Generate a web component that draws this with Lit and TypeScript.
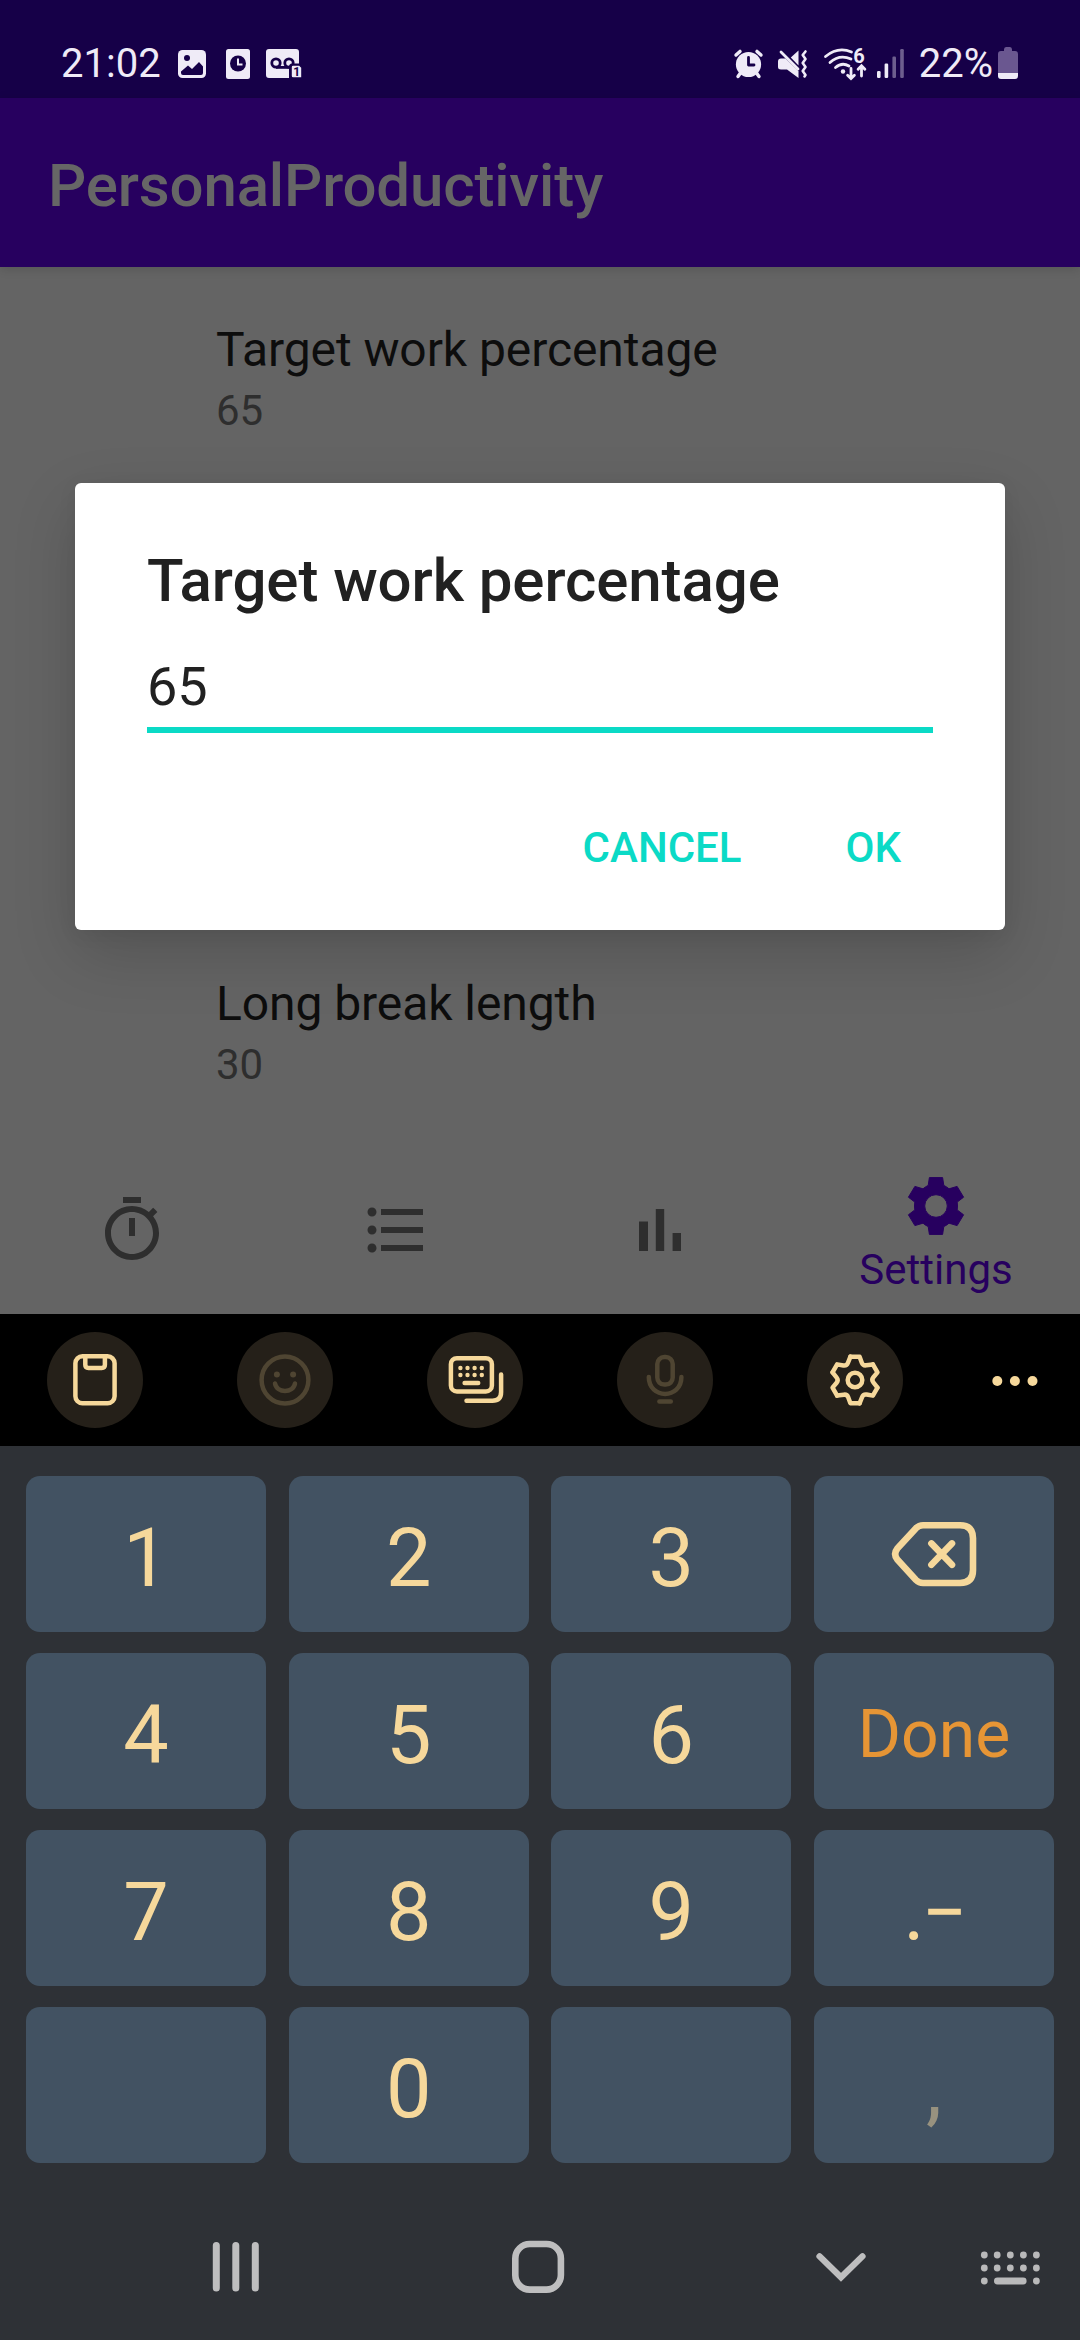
import { LitElement, html, svg, css } from "lit";
import { customElement, property } from "lit/decorators.js";

const INK = "#efebf7";

/** Status bar: clock and notifications on the left, device state on the right. */
@customElement("status-bar")
class StatusBar extends LitElement {
  static styles = css`
    :host { display: flex; justify-content: space-between; height: 98px; box-sizing: border-box; padding: 30px 62px 0 61px; background: #160048; color: #efebf7; }
    .group { display: flex; align-items: flex-start; height: 68px; }
    .label { font-size: 40px; line-height: 67px; white-space: nowrap; }
    svg { display: block; overflow: visible; margin-top: 17px; flex: none; }
    .image { margin-left: 17px; }
    .file { margin-left: 20px; }
    .voicemail { margin-left: 16px; }
    .mute { margin-left: 15px; }
    .wifi { margin-left: 16px; }
    .signal { margin-left: 10px; margin-right: 14px; }
    .battery { margin-left: 5px; }
    .tiny { font-size: 12px; font-weight: 700; }
    .six { font-size: 20px; font-weight: 700; }
  `;

  render() {
    return html`
      <div class="group">
        <span class="label">21:02</span>
        <svg class="image" width="28" height="32" viewBox="0 0 28 32">
          <rect x="0" y="3" width="28" height="28" rx="4.5" fill=${INK} />
          <circle cx="9" cy="11" r="3" fill="#160048" />
          <path d="M3 24.5 L10 18.5 L14 22 L21 15 L25 19.5 V26 Q25 28 23 28 H5 Q3 28 3 26 Z" fill="#160048" />
        </svg>
        <svg class="file" width="24" height="32" viewBox="0 0 24 32">
          <rect x="0" y="2" width="24" height="30" rx="2.5" fill=${INK} />
          <circle cx="12" cy="16.5" r="8" fill="#160048" />
          <path d="M12 11.5 V17.5 H16.5" fill="none" stroke=${INK} stroke-width="2" />
        </svg>
        <svg class="voicemail" width="37" height="32" viewBox="0 0 37 32">
          <path d="M3 2 H30 Q33 2 33 5 V16.5 H26 Q23 16.5 23 20 V31 H3 Q0 31 0 28 V5 Q0 2 3 2Z" fill=${INK} />
          <g fill="none" stroke="#160048" stroke-width="2.8">
            <circle cx="10" cy="16" r="4.2" /><circle cx="23" cy="16" r="4.2" /><path d="M10 20.4 H24" />
          </g>
          <path d="M27 18 H33.5 L36 20.5 V31 H27 Q25 31 25 29 V20 Q25 18 27 18Z" fill=${INK} stroke="#160048" stroke-width="1.6" />
          <text class="tiny" x="30.6" y="29" text-anchor="middle" fill="#160048">1</text>
        </svg>
      </div>
      <div class="group">
        <svg width="29" height="32" viewBox="0 0 29 32">
          <circle cx="14.5" cy="17.5" r="12.6" fill=${INK} />
          <g stroke=${INK} stroke-width="3.4" stroke-linecap="round">
            <path d="M2 8 L6 4.4 M27 8 L23 4.4 M6.5 26 L4 29.5 M22.5 26 L25 29.5" />
          </g>
          <path d="M14.5 10.5 V18 H20" fill="none" stroke="#160048" stroke-width="2.8" stroke-linecap="round" stroke-linejoin="round" />
        </svg>
        <svg class="mute" width="30" height="32" viewBox="0 0 30 32">
          <path d="M0 14.5 Q0 11.5 3 11.5 H7.5 L20.5 24 V31 L9 22.5 H3 Q0 22.5 0 20Z" fill=${INK} />
          <path d="M20.5 3.5 V18.5 L12.8 10.5 Z" fill=${INK} />
          <path d="M3 5 L20 22" stroke=${INK} stroke-width="2.8" stroke-linecap="round" />
          <path d="M27.5 4.5 L24.7 8 L27.5 12 L24.7 16 L27.5 20 L24.7 24 L27.5 28 L26.5 29.5" fill="none" stroke=${INK} stroke-width="2.6" stroke-linejoin="round" stroke-linecap="round" />
        </svg>
        <svg class="wifi" width="42" height="32" viewBox="0 0 42 32">
          <g fill="none" stroke=${INK} stroke-width="2.8" stroke-linecap="round">
            <path d="M1.5 9.5 Q14 -.8 27.5 5" /><path d="M6 15.5 Q15.5 6.8 27 12" /><path d="M11.5 20.5 Q18 14.8 25 19" />
            <path d="M27 21.5 V31 M23.6 28.2 L27 31.6 L30.4 28.2 M37.5 29 V19.5 M34.1 22.3 L37.5 18.8 L40.9 22.3" />
          </g>
          <circle cx="19" cy="24.5" r="2.2" fill=${INK} />
          <text class="six" x="29.3" y="15.5" fill=${INK}>6</text>
        </svg>
        <svg class="signal" width="29" height="32" viewBox="0 0 29 32">
          <g fill=${INK}>
            <rect x="1" y="24" width="3.6" height="7" rx="1.2" />
            <rect x="8.6" y="16.5" width="3.6" height="14.5" rx="1.2" />
            <rect x="16.4" y="9.5" width="3.6" height="21.5" rx="1.2" opacity=".4" />
            <rect x="24.2" y="2" width="3.6" height="29" rx="1.2" opacity=".4" />
          </g>
        </svg>
        <span class="label">22%</span>
        <svg class="battery" width="20" height="32" viewBox="0 0 20 32">
          <path d="M6 2.5 Q6 0 8 0 H12 Q14 0 14 2.5 V4 H17 Q20 4 20 7 V26 H0 V7 Q0 4 3 4 H6Z" fill="#6a5790" />
          <path d="M0 26 H20 V29 Q20 32 17 32 H3 Q0 32 0 29Z" fill=${INK} />
        </svg>
      </div>
    `;
  }
}

@customElement("preference-item")
class PreferenceItem extends LitElement {
  @property() label = "";
  @property() value = "";
  static styles = css`
    :host { display: flex; flex-direction: column; gap: 8px; }
    .label { font-size: 48px; line-height: 56px; color: #0d0d0d; letter-spacing: -0.08px; }
    .value { font-size: 42px; line-height: 50px; color: #2e2e2e; }
  `;
  render() {
    return html`<div class="label">${this.label}</div><div class="value">${this.value}</div>`;
  }
}

@customElement("bottom-tabs")
class BottomTabs extends LitElement {
  static styles = css`
    :host { display: grid; grid-template-columns: 264px 264px 264px 288px; height: 168px; fill: #2e2e2e; }
    .tab { display: flex; flex-direction: column; align-items: center; justify-content: center; }
    .active { justify-content: flex-start; padding-top: 24px; gap: 3px; fill: #27005f; color: #27005f; font-size: 42px; line-height: 50px; }
    svg { width: 72px; height: 72px; display: block; }
  `;
  render() {
    return html`
      <div class="tab"><svg viewBox="0 0 24 24"><path d="M15 1H9v2h6V1zm-4 13h2V8h-2v6zm8.03-6.61l1.42-1.42c-.43-.51-.9-.99-1.41-1.41l-1.42 1.42C16.07 4.74 14.12 4 12 4c-4.97 0-9 4.03-9 9s4.02 9 9 9 9-4.03 9-9c0-2.12-.74-4.07-1.97-5.61zM12 20c-3.87 0-7-3.13-7-7s3.13-7 7-7 7 3.13 7 7-3.13 7-7 7z" /></svg></div>
      <div class="tab"><svg viewBox="0 0 24 24"><path d="M4 10.5c-.83 0-1.5.67-1.5 1.5s.67 1.5 1.5 1.5 1.5-.67 1.5-1.5-.67-1.5-1.5-1.5zm0-6c-.83 0-1.5.67-1.5 1.5S3.17 7.5 4 7.5 5.5 6.83 5.5 6 4.83 4.5 4 4.5zm0 12c-.83 0-1.5.68-1.5 1.5s.68 1.5 1.5 1.5 1.5-.68 1.5-1.5-.67-1.5-1.5-1.5zM7 19h14v-2H7v2zm0-6h14v-2H7v2zm0-8v2h14V5H7z" /></svg></div>
      <div class="tab"><svg viewBox="0 0 24 24"><path d="M5 9.2h3V19H5zM10.6 5h2.8v14h-2.8zm5.6 8H19v6h-2.8z" /></svg></div>
      <div class="tab active">
        <svg viewBox="-36 -36 72 72"><path fill-rule="evenodd" stroke="#27005f" stroke-width="1" stroke-linejoin="round" d="M-6.6 -28.4 H6.6 L7.8 -20.6 Q10.6 -19.3 13 -17.2 L21.1 -19.6 L27.6 -8.8 L21.2 -3.9 Q21.8 0 21.2 3.9 L27.6 8.8 L21.1 19.6 L13 17.2 Q10.6 19.3 7.8 20.6 L6.6 28.4 H-6.6 L-7.8 20.6 Q-10.6 19.3 -13 17.2 L-21.1 19.6 L-27.6 8.8 L-21.2 3.9 Q-21.8 0 -21.2 -3.9 L-27.6 -8.8 L-21.1 -19.6 L-13 -17.2 Q-10.6 -19.3 -7.8 -20.6 Z M0 -11.3 A11.3 11.3 0 1 0 0 11.3 A11.3 11.3 0 1 0 0 -11.3 Z" /></svg>
        <span>Settings</span>
      </div>
    `;
  }
}

@customElement("edit-dialog")
class EditDialog extends LitElement {
  static styles = css`
    :host { display: flex; flex-direction: column; box-sizing: border-box; width: 930px; height: 447px; padding: 63px 72px 0; background: #fff; border-radius: 6px; color: #212121; box-shadow: 0 24px 64px rgba(0, 0, 0, 0.16), 0 4px 20px rgba(0, 0, 0, 0.06); }
    .title { font-size: 60px; line-height: 70px; font-weight: 500; letter-spacing: -0.08px; }
    .field { margin-top: 39px; padding-bottom: 8px; border-bottom: 6px solid #0bdac6; font-size: 54px; line-height: 64px; }
    .actions { display: flex; justify-content: flex-end; gap: 104px; margin: 90px 32px 0 0; font-size: 42px; line-height: 50px; font-weight: 500; color: #0bdac6; }
  `;
  render() {
    return html`
      <div class="title">Target work percentage</div>
      <div class="field">65</div>
      <div class="actions"><span>CANCEL</span><span>OK</span></div>
    `;
  }
}

const GEAR_STEPS = [0, 60, 120, 180, 240, 300];

@customElement("keyboard-toolbar")
class KeyboardToolbar extends LitElement {
  static styles = css`
    :host { display: flex; align-items: center; height: 132px; box-sizing: border-box; padding-left: 47px; gap: 94px; background: #000; }
    .tool { width: 96px; height: 96px; border-radius: 50%; background: #252019; flex: none; }
    svg { display: block; fill: none; stroke: #f6d89b; stroke-width: 4.5; stroke-linecap: round; stroke-linejoin: round; }
    .dim svg { stroke: #4f4532; }
    .solid { fill: #f6d89b; stroke: none; }
    .dim .solid { fill: #4f4532; }
    .more { margin-left: -14px; }
  `;
  render() {
    return html`
      <div class="tool"><svg width="96" height="96">
        <rect x="28.4" y="24.3" width="39.2" height="47" rx="7" />
        <path d="M38.3 25 V32.8 Q38.3 36 41.5 36 H54.7 Q57.9 36 57.9 32.8 V25" />
      </svg></div>
      <div class="tool dim"><svg width="96" height="96">
        <circle cx="48" cy="48" r="23.4" />
        <circle class="solid" cx="39.9" cy="42.6" r="3" /><circle class="solid" cx="56.1" cy="42.6" r="3" />
        <path d="M38 51.5 C40 61.5 56 61.5 58 51.5" />
      </svg></div>
      <div class="tool"><svg width="96" height="96">
        <rect x="23.9" y="26.2" width="41" height="33.2" rx="6" />
        ${[33.4, 40.5, 47.6, 54.8].map((x) => [36, 43].map((y) => svg`<circle class="solid" cx=${x} cy=${y} r="2.2" />`))}
        <path d="M37.6 51 H51.2" />
        <path d="M74.1 42.4 V60 Q74.1 68.7 65.4 68.7 H39.5" />
      </svg></div>
      <div class="tool dim"><svg width="96" height="96">
        <rect x="40.3" y="25" width="15.4" height="27.6" rx="7" />
        <path d="M31.8 45 C31.8 67.5 64.4 67.5 64.4 45" />
        <path d="M42.4 69.4 H53.8" />
      </svg></div>
      <div class="tool"><svg width="96" height="96"><g transform="translate(48 48)">
        <circle r="7.3" />
        ${GEAR_STEPS.map((a) => svg`<path transform=${`rotate(${a})`} d="M-4.6 -23.3 H4.6 L6.8 -17.3 Q8 -14.2 11.2 -14.7 L17.9 -15.6" />`)}
      </g></svg></div>
      <svg class="more" width="60" height="20">
        <g class="solid"><circle cx="14.3" cy="11" r="5" /><circle cx="31.9" cy="11" r="5" /><circle cx="49.5" cy="11" r="5" /></g>
      </svg>
    `;
  }
}

const KEYS = ["1", "2", "3", "back", "4", "5", "6", "Done", "7", "8", "9", ".−", "", "0", "", ","];

@customElement("number-pad")
class NumberPad extends LitElement {
  static styles = css`
    :host { display: grid; grid-template-columns: repeat(4, 240px); grid-auto-rows: 156px; row-gap: 21px; justify-content: space-between; padding: 30px 26px 0; }
    .key { display: flex; align-items: center; justify-content: center; background: #425262; border-radius: 14px; color: #f6d89b; font-size: 81px; line-height: 96px; box-sizing: border-box; padding-top: 10px; }
    .done { color: #e69535; font-size: 66px; line-height: 78px; padding-top: 7px; }
    .symbols { font-size: 80px; letter-spacing: -3px; }
    .comma { color: #98927f; padding-top: 8px; }
    .back { padding-top: 0; }
    svg { fill: none; stroke: #f6d89b; stroke-width: 6.6; stroke-linecap: round; stroke-linejoin: round; }
  `;
  private keyClass(k: string) {
    const extra: Record<string, string> = { back: "back", Done: "done", ".−": "symbols", ",": "comma" };
    return `key ${extra[k] ?? ""}`;
  }
  render() {
    return KEYS.map(
      (k) => html`<div class=${this.keyClass(k)}>${k === "back"
        ? html`<svg width="86" height="66" viewBox="0 0 86 66">
            <path d="M32 4.3 H69 Q82 4.3 82 17.3 V49 Q82 62 69 62 H32 Q28 62 25 59 L6.3 38.5 Q2 33 6.3 27.6 L25 7.2 Q28 4.3 32 4.3 Z" />
            <path d="M40.4 22.4 L61 43.8 M61 22.4 L40.4 43.8" />
          </svg>`
        : k}</div>`
    );
  }
}

@customElement("system-nav")
class SystemNav extends LitElement {
  static styles = css`
    :host { display: flex; align-items: center; height: 146px; margin-top: auto; padding-left: 212px; }
    svg { display: block; fill: none; stroke: #bebebf; stroke-linecap: round; overflow: visible; }
    .home { margin-left: 252px; }
    .hide { margin-left: 252px; }
    .switch { margin-left: 115px; fill: #b9b9ba; stroke: none; }
  `;
  render() {
    return html`
      <svg width="48" height="54"><path d="M4.3 5.5 V48 M23.8 5.5 V48 M43.3 5.5 V48" stroke-width="7" /></svg>
      <svg class="home" width="52" height="54"><rect x="3.3" y="4" width="45.6" height="45.6" rx="14.5" stroke-width="6.6" /></svg>
      <svg class="hide" width="50" height="54"><path d="M3.5 16.3 L25 37.3 L46.5 16.3" stroke-width="6.2" /></svg>
      <svg class="switch" width="60" height="54">
        ${[3.3, 16.2, 29.3, 42.4, 55.4].map((x) => [15, 28].map((y) => svg`<circle cx=${x} cy=${y} r="3.4" />`))}
        <circle cx="3.3" cy="41" r="3.4" /><rect x="13" y="37.6" width="32.6" height="6.8" rx="3.4" /><circle cx="55.4" cy="41" r="3.4" />
      </svg>
    `;
  }
}

@customElement("app-root")
class AppRoot extends LitElement {
  static styles = css`
    :host { display: flex; flex-direction: column; width: 1080px; height: 2340px; overflow: hidden; font-family: Roboto, "Noto Sans", sans-serif; background: #2e3136; }
    .app { position: relative; display: flex; flex-direction: column; height: 1314px; background: #646464; flex: none; }
    .bar { height: 169px; box-sizing: border-box; padding: 6px 48px 0; display: flex; align-items: center; background: #27005f; color: #666; font-size: 60px; line-height: 70px; font-weight: 500; letter-spacing: -0.15px; box-shadow: 0 2px 10px rgba(0, 0, 0, 0.14); }
    .list { flex: 1; display: flex; flex-direction: column; gap: 540px; padding: 55px 0 0 216px; }
    .dialog { position: absolute; left: 75px; top: 483px; }
    .keyboard { flex: 1; display: flex; flex-direction: column; }
  `;
  render() {
    return html`
      <div class="app">
        <status-bar></status-bar>
        <div class="bar">PersonalProductivity</div>
        <div class="list">
          <preference-item label="Target work percentage" value="65"></preference-item>
          <preference-item label="Long break length" value="30"></preference-item>
        </div>
        <bottom-tabs></bottom-tabs>
        <edit-dialog class="dialog"></edit-dialog>
      </div>
      <div class="keyboard">
        <keyboard-toolbar></keyboard-toolbar>
        <number-pad></number-pad>
        <system-nav></system-nav>
      </div>
    `;
  }
}
